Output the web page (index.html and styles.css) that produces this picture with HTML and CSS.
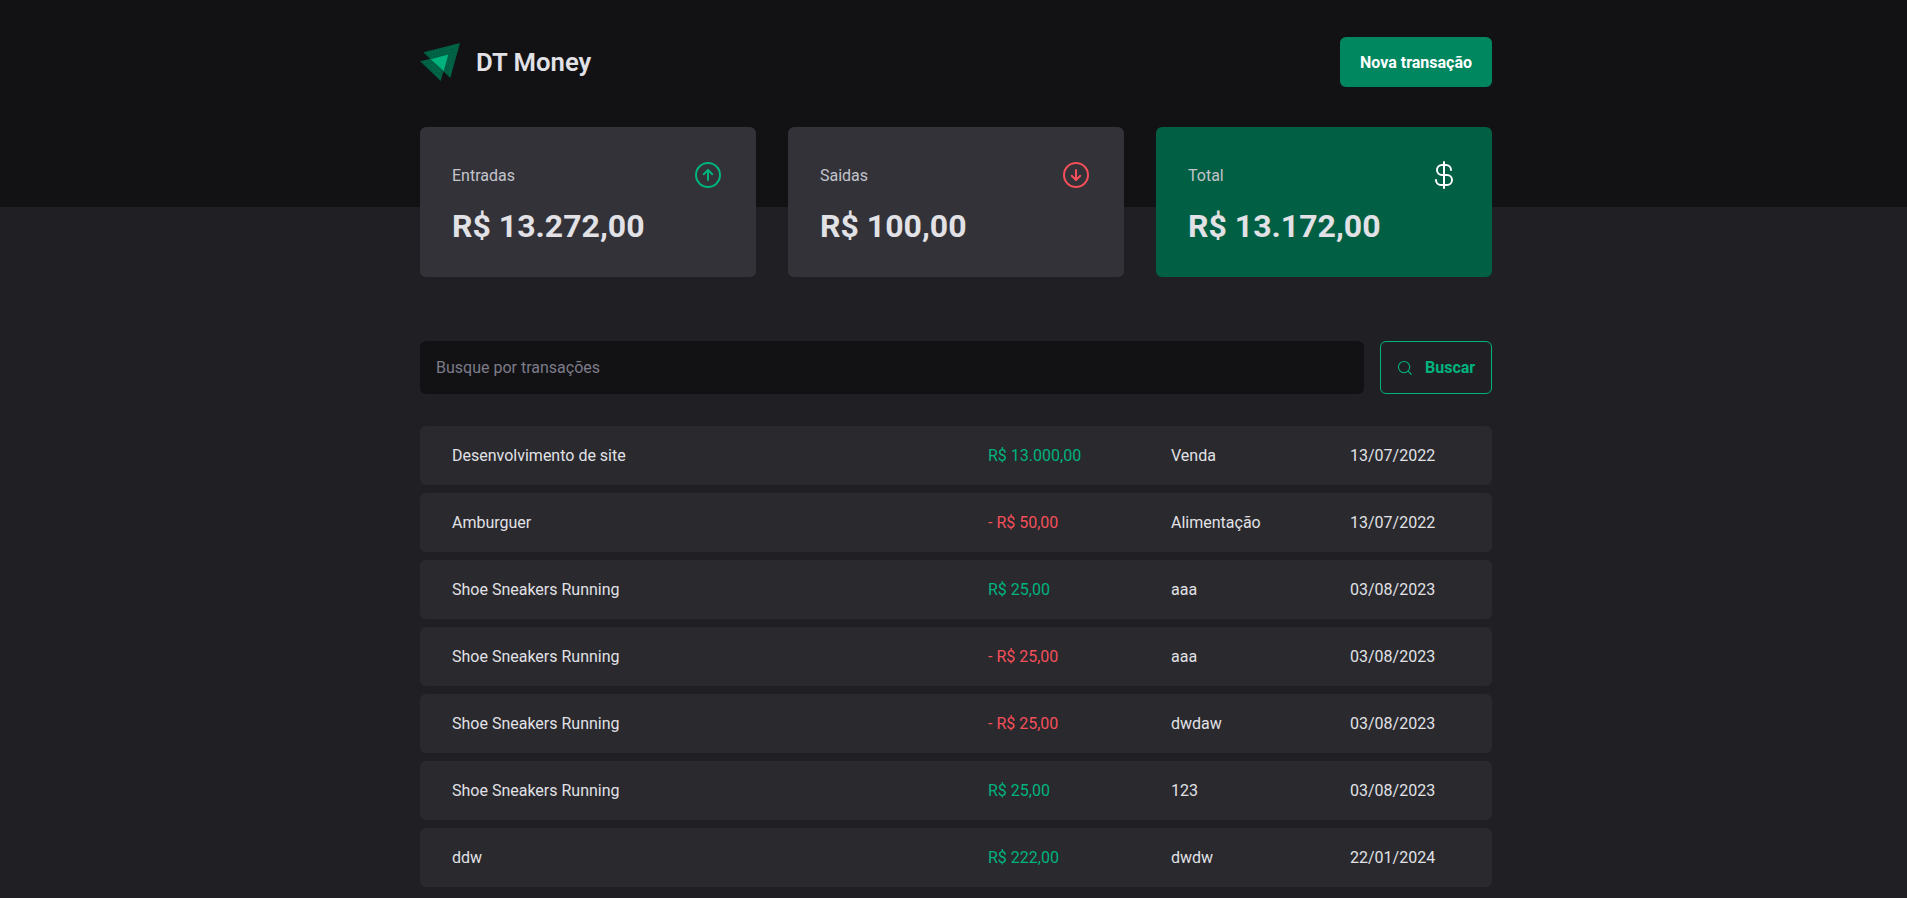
FILE: index.html
```
<!DOCTYPE html>
<html lang="pt-BR">
<head>
    <meta charset="UTF-8">
    <meta name="viewport" content="width=device-width, initial-scale=1.0">
    <title>DT Money</title>
    <link rel="stylesheet" href="styles.css">
</head>
<body>
    <header class="header">
        <div class="container header-content">
            <div class="logo">
                <svg width="40" height="38" viewBox="0 0 40 38">
                    <path d="M40 0L30.3 35L3.3 9.3Z" fill="#015f43"/>
                    <path d="M0 18.3L28.3 11.5L20.7 38Z" fill="#015f43"/>
                    <path d="M10.7 16.3L28.3 11.5L23.7 28Z" fill="#00b37e"/>
                    <g fill="none" stroke="#00b37e" stroke-opacity="0.45" stroke-width="1" stroke-linecap="round" stroke-dasharray="0 3.3">
                        <path d="M9 10.3L36.5 3.2"/>
                        <path d="M12.5 12.8L36 6.8"/>
                        <path d="M31 11.5L30.5 32"/>
                        <path d="M5 19.6L20.5 34.5"/>
                        <path d="M9.5 19.2L21 30"/>
                    </g>
                </svg>
                <span>DT Money</span>
            </div>
            <button class="new-transaction">Nova transação</button>
        </div>
    </header>

    <section class="container summary">
        <div class="card">
            <div class="card-header">
                <span>Entradas</span>
                <svg width="32" height="32" viewBox="0 0 256 256" fill="none" stroke="#00b37e" stroke-width="16" stroke-linecap="round" stroke-linejoin="round">
                    <circle cx="128" cy="128" r="96"/>
                    <polyline points="94 121.9 128 88 162 121.9"/>
                    <line x1="128" y1="168" x2="128" y2="88"/>
                </svg>
            </div>
            <strong>R$ 13.272,00</strong>
        </div>
        <div class="card">
            <div class="card-header">
                <span>Saidas</span>
                <svg width="32" height="32" viewBox="0 0 256 256" fill="none" stroke="#f54f5a" stroke-width="16" stroke-linecap="round" stroke-linejoin="round">
                    <circle cx="128" cy="128" r="96"/>
                    <polyline points="94 134.1 128 168 162 134.1"/>
                    <line x1="128" y1="88" x2="128" y2="168"/>
                </svg>
            </div>
            <strong>R$ 100,00</strong>
        </div>
        <div class="card card-green">
            <div class="card-header">
                <span>Total</span>
                <svg width="32" height="32" viewBox="0 0 256 256" fill="none" stroke="#fff" stroke-width="16" stroke-linecap="round" stroke-linejoin="round">
                    <line x1="128" y1="24" x2="128" y2="232"/>
                    <path d="M184 88a40 40 0 0 0-40-40h-32a40 40 0 0 0 0 80h40a40 40 0 0 1 0 80h-48a40 40 0 0 1-40-40"/>
                </svg>
            </div>
            <strong>R$ 13.172,00</strong>
        </div>
    </section>

    <main class="container transactions">
        <form class="search">
            <input type="text" placeholder="Busque por transações">
            <button type="submit">
                <svg width="20" height="20" viewBox="0 0 256 256" fill="none" stroke="currentColor" stroke-width="14" stroke-linecap="round">
                    <circle cx="116" cy="116" r="72"/>
                    <line x1="168" y1="168" x2="208" y2="208"/>
                </svg>
                Buscar
            </button>
        </form>

        <table>
            <tbody>
                <tr>
                    <td class="title">Desenvolvimento de site</td>
                    <td class="price income">R$ 13.000,00</td>
                    <td class="category">Venda</td>
                    <td>13/07/2022</td>
                </tr>
                <tr>
                    <td class="title">Amburguer</td>
                    <td class="price outcome">- R$ 50,00</td>
                    <td class="category">Alimentação</td>
                    <td>13/07/2022</td>
                </tr>
                <tr>
                    <td class="title">Shoe Sneakers Running</td>
                    <td class="price income">R$ 25,00</td>
                    <td class="category">aaa</td>
                    <td>03/08/2023</td>
                </tr>
                <tr>
                    <td class="title">Shoe Sneakers Running</td>
                    <td class="price outcome">- R$ 25,00</td>
                    <td class="category">aaa</td>
                    <td>03/08/2023</td>
                </tr>
                <tr>
                    <td class="title">Shoe Sneakers Running</td>
                    <td class="price outcome">- R$ 25,00</td>
                    <td class="category">dwdaw</td>
                    <td>03/08/2023</td>
                </tr>
                <tr>
                    <td class="title">Shoe Sneakers Running</td>
                    <td class="price income">R$ 25,00</td>
                    <td class="category">123</td>
                    <td>03/08/2023</td>
                </tr>
                <tr>
                    <td class="title">ddw</td>
                    <td class="price income">R$ 222,00</td>
                    <td class="category">dwdw</td>
                    <td>22/01/2024</td>
                </tr>
            </tbody>
        </table>
    </main>
</body>
</html>
```

FILE: styles.css
```
* {
    margin: 0;
    padding: 0;
    box-sizing: border-box;
}

body {
    width: 1912px;
    background-color: #202024;
    color: #e1e1e6;
    -webkit-font-smoothing: antialiased;
}

html {
    overflow: hidden;
}

body, input, button {
    font-family: Roboto, sans-serif;
    font-size: 16px;
    font-weight: 400;
}

.container {
    width: 100%;
    max-width: 1120px;
    margin: 0 auto;
    padding: 0 24px;
}

.header {
    height: 207px;
    padding-top: 37px;
    background-color: #121214;
}

.header-content {
    display: flex;
    justify-content: space-between;
    align-items: center;
}

.logo {
    display: flex;
    align-items: center;
    gap: 16px;
    font-size: 25.7px;
    font-weight: 600;
    line-height: 29px;
}

.new-transaction {
    height: 50px;
    padding: 0 20px;
    border: 0;
    border-radius: 6px;
    background-color: #00875f;
    color: #fff;
    font-weight: 700;
    cursor: pointer;
}

.summary {
    display: grid;
    grid-template-columns: repeat(3, 1fr);
    gap: 32px;
    margin-top: -80px;
}

.card {
    height: 150px;
    padding: 32px;
    border-radius: 6px;
    background-color: #323238;
}

.card-green {
    background-color: #015f43;
}

.card-header {
    display: flex;
    justify-content: space-between;
    align-items: center;
    color: #c4c4cc;
}

.card strong {
    display: block;
    margin-top: 16px;
    font-size: 32px;
    line-height: 38px;
}

.transactions {
    margin-top: 64px;
}

.search {
    display: flex;
    gap: 16px;
}

.search input {
    flex: 1;
    height: 53px;
    padding: 0 16px;
    border: 0;
    border-radius: 6px;
    background-color: #121214;
    color: #c4c4cc;
}

.search input::placeholder {
    color: #7c7c8a;
}

.search button {
    display: flex;
    align-items: center;
    gap: 10px;
    width: 112px;
    padding-left: 14px;
    border: 1px solid #00b37e;
    border-radius: 6px;
    background: transparent;
    color: #00b37e;
    font-weight: 700;
    cursor: pointer;
}

table {
    width: 100%;
    margin-top: 24px;
    border-collapse: separate;
    border-spacing: 0 8px;
}

td {
    height: 59px;
    padding: 0 32px;
    background-color: #29292e;
}

td:first-child {
    border-radius: 6px 0 0 6px;
}

td:last-child {
    border-radius: 0 6px 6px 0;
}

.title {
    width: 50%;
}

.price {
    width: 183px;
}

.category {
    width: 179px;
}

.income {
    color: #00b37e;
}

.outcome {
    color: #f54f5a;
}
```
